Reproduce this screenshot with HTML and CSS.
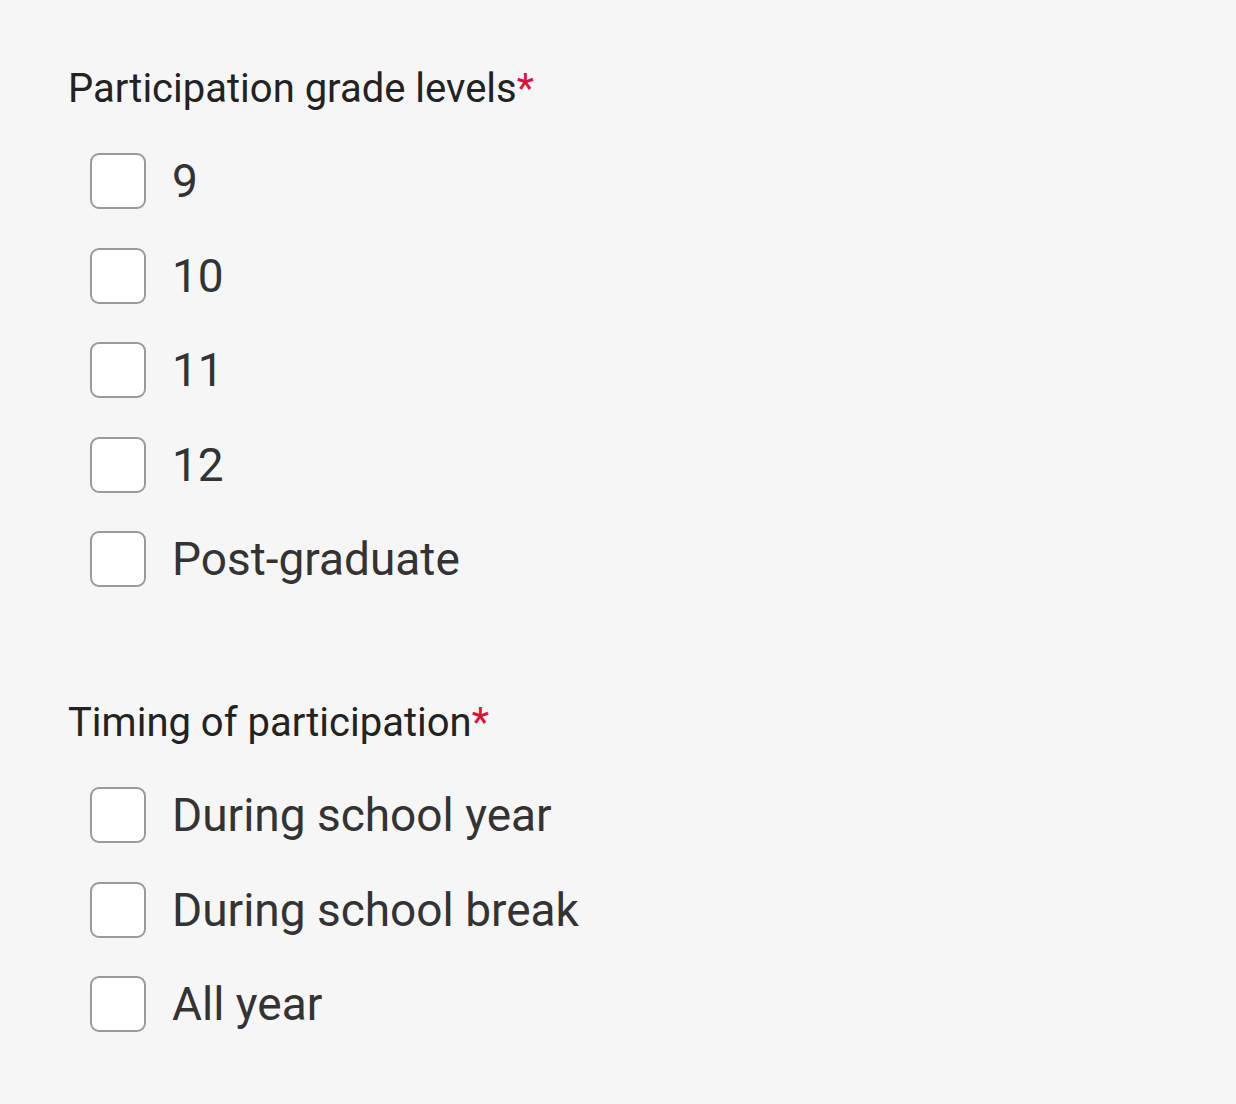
FILE: index.html
```html
<!DOCTYPE html>
<html lang="en">
<head>
<meta charset="utf-8">
<link rel="stylesheet" href="styles.css">
</head>
<body>
<main class="form">
  <fieldset class="group">
    <legend class="group-label">Participation grade levels<span class="req">*</span></legend>
    <div class="options">
      <label class="option"><span class="box"></span><span class="text">9</span></label>
      <label class="option"><span class="box"></span><span class="text">10</span></label>
      <label class="option"><span class="box"></span><span class="text">11</span></label>
      <label class="option"><span class="box"></span><span class="text">12</span></label>
      <label class="option"><span class="box"></span><span class="text">Post-graduate</span></label>
    </div>
  </fieldset>
  <fieldset class="group">
    <legend class="group-label">Timing of participation<span class="req">*</span></legend>
    <div class="options">
      <label class="option"><span class="box"></span><span class="text">During school year</span></label>
      <label class="option"><span class="box"></span><span class="text">During school break</span></label>
      <label class="option"><span class="box"></span><span class="text">All year</span></label>
    </div>
  </fieldset>
</main>
</body>
</html>
```

FILE: styles.css
```css
html, body {
  margin: 0;
  padding: 0;
  background: #f6f6f6;
}
body {
  font-family: "Roboto", "Noto Sans", sans-serif;
  color: #222222;
}
.form {
  padding: 65px 0 0 68px;
  display: flex;
  flex-direction: column;
  gap: 112px;
}
.group {
  border: 0;
  margin: 0;
  padding: 0;
  display: flex;
  flex-direction: column;
}
.group-label {
  padding: 0;
  font-size: 40px;
  line-height: 48px;
  font-weight: 400;
  color: #222222;
  margin-bottom: 40px;
  float: left;
}
.req {
  color: #e0103a;
}
.options {
  clear: both;
  display: flex;
  flex-direction: column;
  gap: 38.5px;
  padding-left: 22px;
}
.option {
  display: flex;
  align-items: center;
  gap: 26px;
  height: 56px;
}
.box {
  width: 56px;
  height: 56px;
  box-sizing: border-box;
  border: 2.5px solid #9a9a9a;
  border-radius: 9px;
  background: #ffffff;
  flex: none;
}
.text {
  font-size: 46px;
  line-height: 56px;
  color: #333333;
}
```
